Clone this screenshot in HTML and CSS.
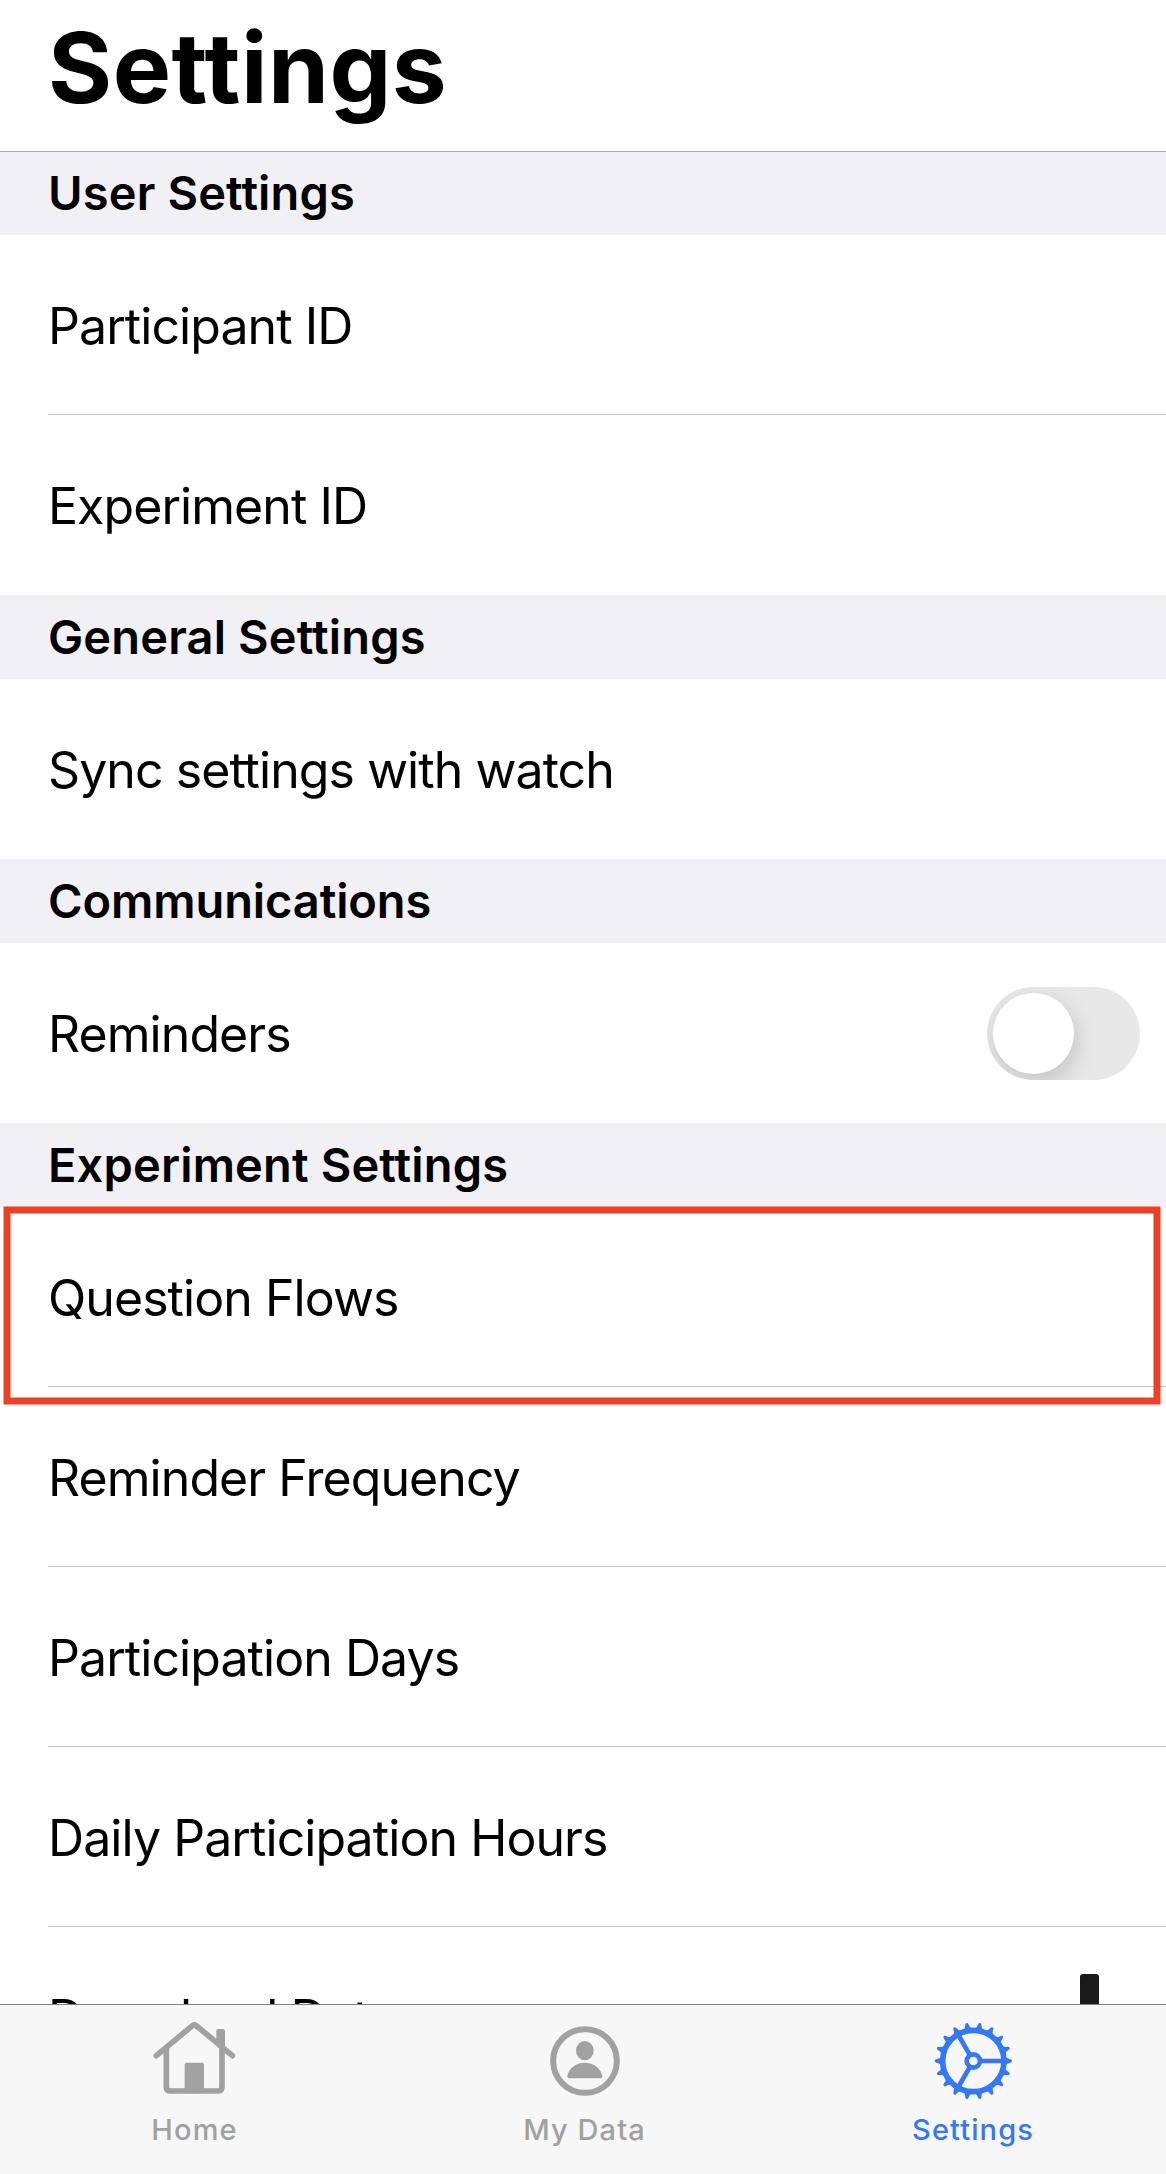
FILE: index.html
```html
<!DOCTYPE html>
<html lang="en">
<head>
<meta charset="utf-8">
<title>Settings</title>
<link rel="stylesheet" href="styles.css">
</head>
<body>
<div class="app">
  <header class="title"><h1>Settings</h1></header>
  <main class="list">
    <section>
      <h2>User Settings</h2>
      <div class="row"><span>Participant ID</span></div>
      <div class="row"><span>Experiment ID</span></div>
    </section>
    <section>
      <h2>General Settings</h2>
      <div class="row"><span>Sync settings with watch</span></div>
    </section>
    <section>
      <h2 class="tight">Communications</h2>
      <div class="row"><span>Reminders</span><span class="toggle"><span class="thumb"></span></span></div>
    </section>
    <section>
      <h2>Experiment Settings</h2>
      <div class="row marked">
        <span>Question Flows</span>
        <svg class="marker" width="1166" height="200" viewBox="0 0 1166 200"><rect x="7" y="4" width="1150" height="191"/></svg>
      </div>
      <div class="row"><span>Reminder Frequency</span></div>
      <div class="row"><span>Participation Days</span></div>
      <div class="row"><span>Daily Participation Hours</span></div>
      <div class="row"><span>Download Data</span><span class="download"></span></div>
    </section>
  </main>
  <nav class="tabs">
    <a class="tab">
      <svg class="icon" viewBox="457 357 252 252">
        <path class="line" d="M467 467 L574 378 Q581 372 588 378 L695 467" stroke-width="17"/>
        <path class="line" d="M497 445 V560 Q497 573 510 573 H651 Q664 573 664 560 V445" stroke-width="17"/>
        <path class="fill" d="M647 432 V393 Q647 387 653 387 H667 Q673 387 673 393 V452Z"/>
        <path class="fill" d="M552 574 V495 Q552 488 559 488 H603 Q610 488 610 495 V574Z"/>
      </svg>
      <span>Home</span>
    </a>
    <a class="tab">
      <svg class="icon" viewBox="189 87 252 252">
        <circle class="line" cx="315" cy="213" r="95.5" stroke-width="18"/>
        <ellipse class="fill" cx="314.500" cy="182" rx="26.500" ry="29"/>
        <path class="fill" d="M262 259 C264 236 288 218 314 218 C341 218 364 236 367 259 Q367 265 361 265 H268 Q262 265 262 259Z"/>
      </svg>
      <span>My Data</span>
    </a>
    <a class="tab active">
      <svg class="icon" viewBox="-127 -126 252 252">
        <defs><path id="tooth" d="M94 -15 Q101 -6 111 -5 Q116 -4 116 0 Q116 4 111 5 Q101 6 94 15Z"/></defs>
        <circle class="line" r="92" stroke-width="17"/>
        <circle class="line" r="20" stroke-width="14"/>
        <path class="line butt" stroke-width="14" d="M22 0H90M-11 -19L-45 -78M-11 19L-45 78"/>
        <g class="fill">
          <use href="#tooth"/><use href="#tooth" transform="rotate(20)"/><use href="#tooth" transform="rotate(40)"/>
          <use href="#tooth" transform="rotate(60)"/><use href="#tooth" transform="rotate(80)"/><use href="#tooth" transform="rotate(100)"/>
          <use href="#tooth" transform="rotate(120)"/><use href="#tooth" transform="rotate(140)"/><use href="#tooth" transform="rotate(160)"/>
          <use href="#tooth" transform="rotate(180)"/><use href="#tooth" transform="rotate(200)"/><use href="#tooth" transform="rotate(220)"/>
          <use href="#tooth" transform="rotate(240)"/><use href="#tooth" transform="rotate(260)"/><use href="#tooth" transform="rotate(280)"/>
          <use href="#tooth" transform="rotate(300)"/><use href="#tooth" transform="rotate(320)"/><use href="#tooth" transform="rotate(340)"/>
        </g>
      </svg>
      <span>Settings</span>
    </a>
  </nav>
</div>
</body>
</html>
```

FILE: styles.css
```css
* { box-sizing: border-box; }

body {
  margin: 0;
  background: #fff;
  color: #000;
  font-family: Inter, "Liberation Sans", sans-serif;
}

.app {
  display: flex;
  flex-direction: column;
  height: 2174px;
  overflow: hidden;
}

.title {
  flex: none;
  height: 152px;
  padding-left: 48px;
  border-bottom: 1px solid #aaa;
}

h1 {
  margin: 0;
  font-size: 98px;
  font-weight: 700;
  line-height: 135px;
  letter-spacing: 0.5px;
}

.list {
  flex: 1;
  min-height: 0;
  overflow: hidden;
}

h2 {
  height: 84px;
  margin: 0;
  padding-left: 48px;
  background: #f1f0f5;
  font-size: 47px;
  font-weight: 600;
  line-height: 83px;
  letter-spacing: 0.15px;
}

h2.tight { letter-spacing: -0.1px; }

section:first-child h2 {
  height: 83px;
  line-height: 81px;
}

.row {
  display: flex;
  align-items: center;
  justify-content: space-between;
  height: 180px;
  margin-left: 48px;
  padding: 2px 26px 0 0;
  border-bottom: 1px solid #c6c6c8;
  font-size: 50px;
  line-height: 60px;
  letter-spacing: -0.93px;
}

.row:last-child { border-bottom-color: transparent; }

.toggle {
  width: 153px;
  height: 93px;
  padding: 6px;
  border-radius: 47px;
  background: #e8e8e9;
  overflow: hidden;
}

.thumb {
  display: block;
  width: 81px;
  height: 81px;
  border-radius: 50%;
  background: #fff;
  box-shadow: 3px 8px 22px rgba(0, 0, 0, 0.16);
}

.marked { position: relative; }

.marker {
  position: absolute;
  top: -1px;
  left: -48px;
  z-index: 1;
  fill: none;
  stroke: #ec4026;
  stroke-width: 7;
}

.download {
  align-self: flex-start;
  width: 19px;
  height: 90px;
  margin: 45px 41px 0 0;
  border-radius: 3px;
  background: #1a1a1a;
}

.tabs {
  flex: none;
  display: grid;
  grid-template-columns: 389px 391px 386px;
  height: 170px;
  border-top: 1px solid #828282;
  background: #f7f7f7;
}

.tab {
  display: flex;
  flex-direction: column;
  align-items: center;
  padding-top: 14px;
  color: #a1a1a1;
  font-size: 29px;
  font-weight: 450;
  line-height: 36px;
  letter-spacing: 1.1px;
}

.tab span { margin-top: 9px; }

.active { color: #3478f6; }

.icon {
  width: 84px;
  height: 84px;
}

.line {
  fill: none;
  stroke: currentColor;
  stroke-linecap: round;
}

.butt { stroke-linecap: butt; }

.fill { fill: currentColor; }
```
